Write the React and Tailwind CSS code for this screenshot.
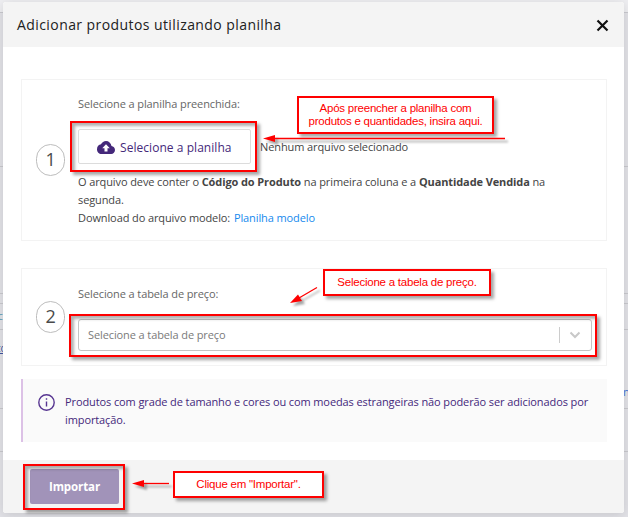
import React from "react";

const SHADOW = "shadow-[3px_3px_3px_rgba(0,0,0,0.35)]";

function Highlight({ className }) {
  return (
    <div
      className={`pointer-events-none absolute border-2 border-[#fe0000] shadow-[3px_3px_3px_rgba(0,0,0,0.35),inset_3px_3px_3px_rgba(0,0,0,0.3)] ${className}`}
    />
  );
}

function Callout({ className, children }) {
  return (
    <div
      className={`absolute flex flex-col items-center justify-center border-2 border-[#fe0000] bg-white font-['Liberation_Sans',Arial,sans-serif] text-[11.5px] leading-[13px] tracking-[-0.23px] whitespace-nowrap text-[#fe0000] ${SHADOW} ${className}`}
    >
      {children}
    </div>
  );
}

function Step({ number, className, children }) {
  return (
    <section className={`flex items-center border border-[#f3f3f3] pl-[14px] ${className}`}>
      <div className="flex h-8 w-[29px] shrink-0 items-center justify-center rounded-full border border-[#bdbdbd] pb-[3px] text-[18px] leading-none text-[#4a4a4a]">
        {number}
      </div>
      <div className="ml-[13px] h-full w-[514px] shrink-0">{children}</div>
    </section>
  );
}

function Backdrop() {
  return (
    <svg className="absolute inset-0" width="628" height="517" viewBox="0 0 628 517">
      <rect width="628" height="12" fill="#eeeef1" />
      <path
        d="M0 12.5H628M0 166.5H628M0 293.5H628M0 303.5H628M0 329.5H628M0 408.5H628M0 451.5H628"
        stroke="#c9c9ce"
      />
      <text x="-2" y="320" fontSize="10" fill="#5d9bb5" fontFamily="Open Sans">c</text>
      <text x="-3" y="352" fontSize="10" fill="#4055a0" textDecoration="underline" fontFamily="Open Sans">to</text>
      <text x="623" y="396" fontSize="11" fill="#4478d8" fontFamily="Open Sans">n</text>
    </svg>
  );
}

function Arrows() {
  return (
    <svg
      className="pointer-events-none absolute inset-0 drop-shadow-[3px_3px_1px_rgba(0,0,0,0.35)]"
      width="628"
      height="517"
      viewBox="0 0 628 517"
      fill="#fe0000"
      stroke="#fe0000"
    >
      <path d="M274 138.5H505" strokeWidth="1.3" />
      <path d="M263 138.5L275 135V142Z" stroke="none" />
      <path d="M299 298L317 287.5" strokeWidth="1.3" />
      <path d="M290 303L298 294.500L302 301Z" stroke="none" />
      <path d="M143 483.500H169" strokeWidth="1.3" />
      <path d="M132 483.500L144 480V487Z" stroke="none" />
    </svg>
  );
}

export default function App() {
  return (
    <div className="relative h-[517px] w-[628px] overflow-hidden bg-[#e2e2e7] font-['Open_Sans',sans-serif]">
      <Backdrop />
      <main className="relative mt-[2px] ml-[3px] flex h-[511px] w-[621px] flex-col overflow-hidden rounded-[3px] bg-white text-[11px] tracking-[-0.105px] text-[#444] shadow-[0_2px_12px_rgba(0,0,0,0.12)]">
        <header className="flex h-[45px] shrink-0 items-center justify-between bg-[#f4f4f4] pr-[15px] pl-[14px]">
          <h1 className="text-[14px] font-medium tracking-[0.42px] whitespace-nowrap text-[#212121]">
            Adicionar produtos utilizando planilha
          </h1>
          <svg className="mt-px" width="13" height="13" viewBox="0 0 13 13" fill="none" stroke="#111" strokeWidth="2.2">
            <path d="M1.500 1.500L11.500 11.500M11.500 1.500L1.500 11.500" />
          </svg>
        </header>

        <div className="flex flex-1 flex-col pt-8 pr-[17px] pl-[18px]">
          <Step number="1" className="h-[162px]">
            <div className="pt-[15px] leading-[18px] text-[#666]">Selecione a planilha preenchida:</div>
            <div className="mt-4 flex items-center">
              <button className="flex h-[35px] w-[173px] items-center rounded-[2px] border border-[#dcdcdc] bg-white pl-[18px] text-[#44287a]">
                <svg className="mt-px" width="18" height="13" viewBox="0 4 24 16" preserveAspectRatio="none" fill="#44287a">
                  <path d="M19.350 10.040C18.670 6.590 15.640 4 12 4 9.110 4 6.600 5.640 5.350 8.040 2.340 8.360 0 10.910 0 14c0 3.310 2.690 6 6 6h13c2.760 0 5-2.240 5-5 0-2.640-2.050-4.780-4.650-4.960zM14 13v4h-4v-4H7l5-5 5 5h-3z" />
                </svg>
                <span className="mt-0.5 ml-[5px] text-[12px] font-medium tracking-[0.05px] whitespace-nowrap">
                  Selecione a planilha
                </span>
              </button>
              <span className="mt-0.5 ml-[9px] whitespace-nowrap">Nenhum arquivo selecionado</span>
            </div>
            <p className="mt-[9px] leading-[18px] whitespace-nowrap">
              O arquivo deve conter o <b>Código do Produto</b> na primeira coluna e a <b>Quantidade Vendida</b> na
              <br />
              segunda.
              <br />
              Download do arquivo modelo: <a className="ml-px text-[#1589ee]">Planilha modelo</a>
            </p>
          </Step>

          <Step number="2" className="mt-[27px] h-[98px]">
            <div className="pt-4 leading-[18px] text-[#666]">Selecione a tabela de preço:</div>
            <div className="mt-4 flex h-8 items-center rounded-[3px] border border-[#c4c4c4] bg-white pl-[9px] text-[#7a7a7a]">
              <span className="flex-1">Selecione a tabela de preço</span>
              <span className="h-4 w-px bg-[#ccc]" />
              <svg className="mr-[10px] ml-[9px]" width="12" height="8" viewBox="0 0 12 8" fill="none" stroke="#c8c8c8" strokeWidth="2">
                <path d="M1.500 1.500L6 6L10.500 1.500" />
              </svg>
            </div>
          </Step>

          <aside className="mt-[13px] flex h-[63px] border-l-2 border-[#dcc1e6] bg-[#fafafa] pt-[14px] pl-[15px] leading-[18px] text-[#44287a]">
            <svg className="mt-px shrink-0" width="17" height="17" viewBox="0 0 17 17" fill="none" stroke="#573591" strokeWidth="1.400">
              <circle cx="8.500" cy="8.500" r="7.700" />
              <path d="M8.500 7.500V12.500M8.500 4.300V5.800" />
            </svg>
            <p className="ml-[10px] whitespace-nowrap">
              Produtos com grade de tamanho e cores ou com moedas estrangeiras não poderão ser adicionados por
              <br />
              importação.
            </p>
          </aside>
        </div>

        <footer className="flex h-[53px] shrink-0 items-center bg-[#f4f4f4] pl-[27px]">
          <button className="h-[35px] w-[89px] rounded-[2px] bg-[#a193b9] text-[11.5px] font-bold text-white">
            Importar
          </button>
        </footer>
      </main>

      <Highlight className="top-[121px] left-[70px] h-[51px] w-[187px]" />
      <Highlight className="top-[314px] left-[69px] h-[43px] w-[528px]" />
      <Highlight className="top-[464px] left-[23px] h-[46px] w-[102px]" />
      <Callout className="top-[96px] left-[297px] h-[38px] w-[197px]">
        <span>Após preencher a planilha com</span>
        <span>produtos e quantidades, insira aqui.</span>
      </Callout>
      <Callout className="top-[269px] left-[323px] h-[27px] w-[168px]">Selecione a tabela de preço.</Callout>
      <Callout className="top-[471px] left-[173px] h-[27px] w-[151px]">Clique em "Importar".</Callout>
      <Arrows />
    </div>
  );
}
